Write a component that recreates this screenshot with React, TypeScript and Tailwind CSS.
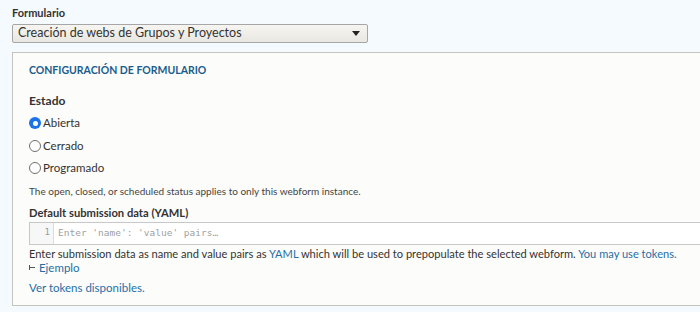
function Radio({ checked }: { checked?: boolean }) {
  if (checked) {
    return (
      <span className="flex size-[12px] items-center justify-center rounded-full bg-[#1a73e8]">
        <span className="size-[5px] rounded-full bg-white"></span>
      </span>
    );
  }
  return <span className="size-[12px] rounded-full border border-[#6f6f6f] bg-white"></span>;
}

const options = [
  { label: "Abierta", checked: true },
  { label: "Cerrado", checked: false },
  { label: "Programado", checked: false },
];

export default function App() {
  return (
    <div className="h-[312px] w-[700px] overflow-hidden bg-[#f5fafe] pl-3 pt-[5px] font-['Lato',sans-serif] text-[#333]">
      <label className="block text-[11px] leading-4 font-bold">Formulario</label>
      <div className="mt-[3px] flex h-[19px] w-[356px] items-center justify-between rounded-[2px] border border-[#a6a6a6] bg-gradient-to-b from-[#f6f5f1] to-[#e8e7e1] pr-[7px] pl-[5px]">
        <span className="text-[12.5px] leading-none text-[#333]">Creación de webs de Grupos y Proyectos</span>
        <svg width="8" height="5" viewBox="0 0 8 5">
          <path d="M0 0h8L4 5z" fill="#222" />
        </svg>
      </div>

      <fieldset className="mt-[9px] w-[720px] border border-[#c4c4bf] bg-[#fcfcfa] pt-2 pb-[9px] pl-4">
        <h2 className="text-[10.5px] leading-[18px] font-bold text-[#195d8d]">CONFIGURACIÓN DE FORMULARIO</h2>

        <div className="mt-[13px] text-[12px] leading-[18px] font-bold">Estado</div>
        <div className="mt-[2px] flex flex-col">
          {options.map((o) => (
            <div key={o.label} className="flex h-[22.5px] items-center gap-[2px]">
              <Radio checked={o.checked} />
              <span className="text-[11.5px] leading-4">{o.label}</span>
            </div>
          ))}
        </div>
        <p className="mt-[3px] text-[10px] leading-4 text-[#444]">
          The open, closed, or scheduled status applies to only this webform instance.
        </p>

        <div className="mt-[6px] text-[11.2px] leading-4 font-bold">Default submission data (YAML)</div>
        <div className="mt-[1px] flex h-[23px] border border-[#c8c8c8] bg-white">
          <div className="flex w-[24px] items-center justify-end border-r border-[#dcdcdc] bg-[#f7f7f7] pr-[3px] font-['DejaVu_Sans_Mono',monospace] text-[9px] text-[#999]">
            1
          </div>
          <div className="flex items-center pl-[4px] font-['DejaVu_Sans_Mono',monospace] text-[9.5px] text-[#a0a0a0]">
            Enter 'name': 'value' pairs…
          </div>
        </div>
        <p className="mt-[1px] text-[11.1px] leading-[15px]">
          Enter submission data as name and value pairs as <span className="text-[#1f6fa6]">YAML</span> which will be
          used to prepopulate the selected webform. <span className="text-[#1f6fa6]">You may use tokens.</span>
        </p>
        <div className="flex items-center gap-[4px] text-[11.5px] leading-[14px] text-[#1f6fa6]">
          <svg width="6" height="5" viewBox="0 0 6 5">
            <path d="M0.5 0v5M0.5 2.5h5.5" stroke="#555" strokeWidth="1" />
          </svg>
          <span>Ejemplo</span>
        </div>
        <div className="mt-[5px] text-[11.5px] leading-4 text-[#1f6fa6]">Ver tokens disponibles.</div>
      </fieldset>
    </div>
  );
}
